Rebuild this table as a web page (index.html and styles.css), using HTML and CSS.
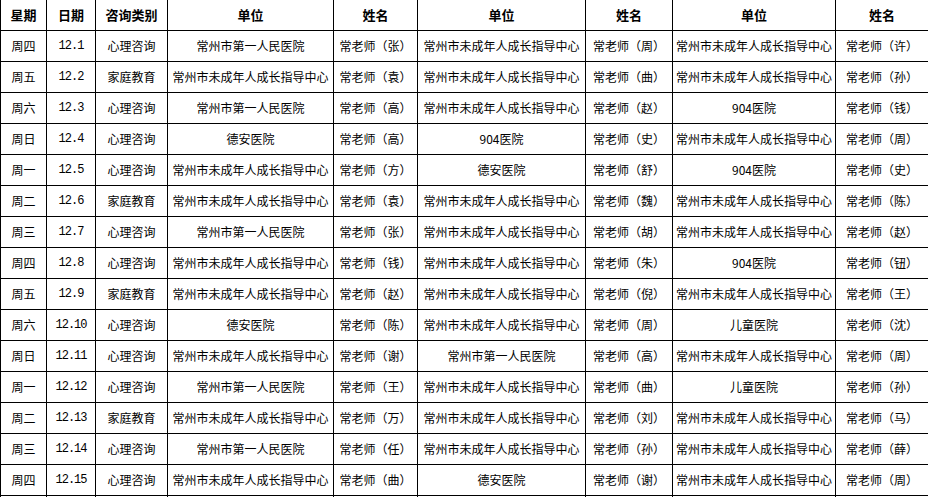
FILE: index.html
```html
<!DOCTYPE html>
<html lang="zh-CN">
<head>
<meta charset="utf-8">
<title>值班表</title>
<link rel="stylesheet" href="styles.css">
</head>
<body>
<table class="schedule">
<colgroup>
<col class="c-week"><col class="c-date"><col class="c-type"><col class="c-unit1"><col class="c-name1"><col class="c-unit2"><col class="c-name2"><col class="c-unit3"><col class="c-name3">
</colgroup>
<thead>
<tr><th>星期</th><th>日期</th><th>咨询类别</th><th>单位</th><th>姓名</th><th>单位</th><th>姓名</th><th>单位</th><th>姓名</th></tr>
</thead>
<tbody>
<tr><td>周四</td><td class="date">12.1</td><td>心理咨询</td><td>常州市第一人民医院</td><td>常老师（张）</td><td>常州市未成年人成长指导中心</td><td>常老师（周）</td><td>常州市未成年人成长指导中心</td><td>常老师（许）</td></tr>
<tr><td>周五</td><td class="date">12.2</td><td>家庭教育</td><td>常州市未成年人成长指导中心</td><td>常老师（袁）</td><td>常州市未成年人成长指导中心</td><td>常老师（曲）</td><td>常州市未成年人成长指导中心</td><td>常老师（孙）</td></tr>
<tr><td>周六</td><td class="date">12.3</td><td>心理咨询</td><td>常州市第一人民医院</td><td>常老师（高）</td><td>常州市未成年人成长指导中心</td><td>常老师（赵）</td><td>904医院</td><td>常老师（钱）</td></tr>
<tr><td>周日</td><td class="date">12.4</td><td>心理咨询</td><td>德安医院</td><td>常老师（高）</td><td>904医院</td><td>常老师（史）</td><td>常州市未成年人成长指导中心</td><td>常老师（周）</td></tr>
<tr><td>周一</td><td class="date">12.5</td><td>心理咨询</td><td>常州市未成年人成长指导中心</td><td>常老师（方）</td><td>德安医院</td><td>常老师（舒）</td><td>904医院</td><td>常老师（史）</td></tr>
<tr><td>周二</td><td class="date">12.6</td><td>家庭教育</td><td>常州市未成年人成长指导中心</td><td>常老师（袁）</td><td>常州市未成年人成长指导中心</td><td>常老师（魏）</td><td>常州市未成年人成长指导中心</td><td>常老师（陈）</td></tr>
<tr><td>周三</td><td class="date">12.7</td><td>心理咨询</td><td>常州市第一人民医院</td><td>常老师（张）</td><td>常州市未成年人成长指导中心</td><td>常老师（胡）</td><td>常州市未成年人成长指导中心</td><td>常老师（赵）</td></tr>
<tr><td>周四</td><td class="date">12.8</td><td>心理咨询</td><td>常州市未成年人成长指导中心</td><td>常老师（钱）</td><td>常州市未成年人成长指导中心</td><td>常老师（朱）</td><td>904医院</td><td>常老师（钮）</td></tr>
<tr><td>周五</td><td class="date">12.9</td><td>家庭教育</td><td>常州市未成年人成长指导中心</td><td>常老师（赵）</td><td>常州市未成年人成长指导中心</td><td>常老师（倪）</td><td>常州市未成年人成长指导中心</td><td>常老师（王）</td></tr>
<tr><td>周六</td><td class="date">12.10</td><td>心理咨询</td><td>德安医院</td><td>常老师（陈）</td><td>常州市未成年人成长指导中心</td><td>常老师（周）</td><td>儿童医院</td><td>常老师（沈）</td></tr>
<tr><td>周日</td><td class="date">12.11</td><td>心理咨询</td><td>常州市未成年人成长指导中心</td><td>常老师（谢）</td><td>常州市第一人民医院</td><td>常老师（高）</td><td>常州市未成年人成长指导中心</td><td>常老师（周）</td></tr>
<tr><td>周一</td><td class="date">12.12</td><td>心理咨询</td><td>常州市第一人民医院</td><td>常老师（王）</td><td>常州市未成年人成长指导中心</td><td>常老师（曲）</td><td>儿童医院</td><td>常老师（孙）</td></tr>
<tr><td>周二</td><td class="date">12.13</td><td>家庭教育</td><td>常州市未成年人成长指导中心</td><td>常老师（万）</td><td>常州市未成年人成长指导中心</td><td>常老师（刘）</td><td>常州市未成年人成长指导中心</td><td>常老师（马）</td></tr>
<tr><td>周三</td><td class="date">12.14</td><td>心理咨询</td><td>常州市第一人民医院</td><td>常老师（任）</td><td>常州市未成年人成长指导中心</td><td>常老师（孙）</td><td>常州市未成年人成长指导中心</td><td>常老师（薛）</td></tr>
<tr><td>周四</td><td class="date">12.15</td><td>心理咨询</td><td>常州市未成年人成长指导中心</td><td>常老师（曲）</td><td>德安医院</td><td>常老师（谢）</td><td>常州市未成年人成长指导中心</td><td>常老师（周）</td></tr>
<tr><td>&nbsp;</td><td></td><td></td><td></td><td></td><td></td><td></td><td></td><td></td></tr>
</tbody>
</table>
</body>
</html>
```

FILE: styles.css
```css
html, body {
  margin: 0;
  padding: 0;
  background: #fff;
  overflow: hidden;
}

.schedule {
  border-collapse: collapse;
  table-layout: fixed;
  width: 928px;
  font-family: "Noto Sans CJK SC", "Noto Sans", sans-serif;
  font-size: 12px;
  color: #000;
}

.c-week { width: 46px; }
.c-date { width: 49px; }
.c-type { width: 72px; }
.c-unit1 { width: 166px; }
.c-name1 { width: 84px; }
.c-unit2 { width: 168px; }
.c-name2 { width: 87px; }
.c-unit3 { width: 163px; }
.c-name3 { width: 93px; }

.schedule th,
.schedule td {
  border: 1px solid #000;
  padding: 0;
  text-align: center;
  vertical-align: middle;
  white-space: nowrap;
  overflow: hidden;
  line-height: 14px;
}

.schedule th {
  border-top: 0;
  height: 30px;
  font-size: 13px;
  font-weight: bold;
}

.schedule td {
  height: 30px;
}

.schedule .date {
  font-family: "Liberation Mono", monospace;
  font-size: 12px;
  letter-spacing: -1px;
}
```
